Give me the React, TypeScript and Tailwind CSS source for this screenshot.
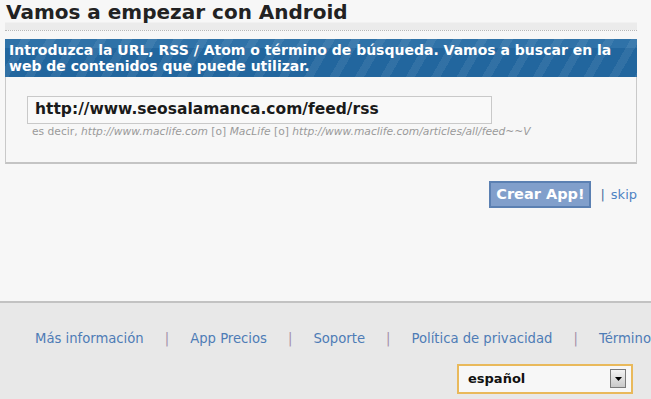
export default function App() {
  const links = ["Más información", "App Precios", "Soporte", "Política de privacidad", "Términos"];

  return (
    <div className="w-[651px] h-[399px] overflow-hidden bg-[#f7f7f7] font-['DejaVu_Sans',sans-serif]">
      <div className="pl-[5px] pr-[14px]">
        {/* Heading */}
        <h1 className="h-[31px] pl-[1px] pt-[1px] text-[20px] leading-[22px] font-bold text-[#222] border-b border-dotted border-[#b8b8b8] bg-[linear-gradient(to_bottom,#f7f7f7_0,#f7f7f7_22px,#ebebeb_23px,#ebebeb_100%)]">
          Vamos a empezar con Android
        </h1>

        {/* Form box */}
        <div className="mt-[8px] border-x border-b-2 border-[#c9c9c9] border-b-[#c4c4c4]">
          <div className="h-[38px] -mx-px px-[4px] pt-[3px] text-[14px] leading-[16px] font-bold text-white bg-[#23679f] bg-[repeating-linear-gradient(120deg,rgba(255,255,255,0)_0,rgba(255,255,255,0)_14px,rgba(255,255,255,0.07)_14px,rgba(255,255,255,0.07)_22px),linear-gradient(to_bottom,#2f72a8_0,#2f72a8_9px,#22669e_9px)]">
            Introduzca la URL, RSS / Atom o término de búsqueda. Vamos a buscar en la web de contenidos que puede utilizar.
          </div>
          <div className="pl-[21px] pt-[19px] pb-[24px]">
            <div className="w-[465px] h-[28px] border border-[#c9c9c9] bg-[#f9f9f9] pl-[7px] flex items-center text-[15.5px] font-bold text-[#1a1a1a]">
              http://www.seosalamanca.com/feed/rss
            </div>
            <div className="mt-[2px] pl-[5px] text-[10.7px] leading-[12px] text-[#9a9a9a]">
              es decir, <i>http://www.maclife.com</i> [o] <i>MacLife</i> [o] <i>http://www.maclife.com/articles/all/feed~~V</i>
            </div>
          </div>
        </div>

        {/* Action row */}
        <div className="mt-[17px] flex items-center justify-end">
          <button className="w-[102px] h-[27px] border-2 border-[#5b80b2] bg-[#819fcb] text-white text-[14.5px] font-bold leading-none">
            Crear App!
          </button>
          <span className="ml-[9px] text-[13px] text-[#4b6e9c]">|</span>
          <a href="#" className="ml-[6px] text-[13px] text-[#4d82c3]">skip</a>
        </div>
      </div>

      {/* Footer */}
      <div className="mt-[93px] h-[120px] border-t-2 border-[#c2c2c2] bg-[#e8e8e8]">
        <div className="flex items-center pl-[35px] pt-[26px] text-[13.2px] text-[#4e7cb6] whitespace-nowrap">
          {links.map((l, i) => (
            <span key={l} className="flex items-center">
              {i > 0 && <span className="mx-[21px] text-[#a48fa8]">|</span>}
              <a href="#">{l}</a>
            </span>
          ))}
        </div>
        <div className="mt-[15px] flex justify-end pr-[18px]">
          <div className="w-[176px] h-[30px] border-2 border-[#e9b95b] bg-[#f7f7f7] flex items-center justify-between pl-[9px] pr-[5px] text-[13px] font-bold text-[#111]">
            español
            <span className="w-[16px] h-[19px] border border-[#7a7a7a] bg-[linear-gradient(to_bottom,#f3f3f3,#c9c9c9)] flex items-center justify-center">
              <svg width="7" height="4" viewBox="0 0 7 4"><path d="M0 0h7L3.5 4z" fill="#000" /></svg>
            </span>
          </div>
        </div>
      </div>
    </div>
  );
}
